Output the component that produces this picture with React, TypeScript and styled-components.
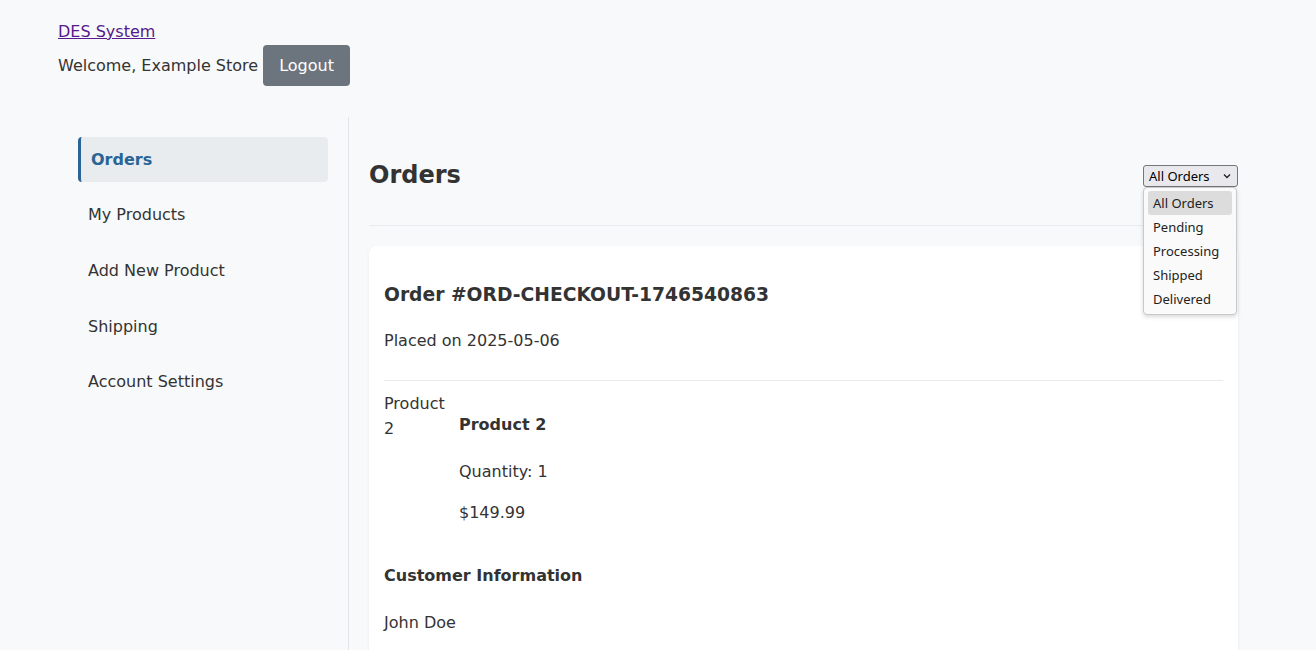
import React from 'react';
import styled, { createGlobalStyle } from 'styled-components';

const GlobalStyle = createGlobalStyle`
  html, body {
    margin: 0;
    padding: 0;
    background: #f8f9fa;
    color: #333;
    font-family: 'DejaVu Sans', Verdana, sans-serif;
    font-size: 16px;
    line-height: 1.6;
  }
  * {
    box-sizing: border-box;
  }
`;

const Page = styled.div`
  width: 1200px;
  margin: 0 auto;
  min-height: 650px;
  display: flex;
  flex-direction: column;
`;

const TopBar = styled.header`
  padding-top: 18px;
  margin-bottom: 30.6px;
`;

const BrandLink = styled.a`
  display: inline-block;
  margin-top: 1px;
  color: #551a8b;
  text-decoration: underline;
  cursor: pointer;
`;

const WelcomeRow = styled.div`
  display: flex;
  align-items: center;
  gap: 5px;
`;

const LogoutButton = styled.button`
  font-family: inherit;
  font-size: 16px;
  line-height: 1.6;
  color: #fff;
  background: #6c757d;
  border: none;
  border-radius: 4px;
  padding: 8px 16px;
  cursor: pointer;
`;

const Layout = styled.div`
  display: flex;
  flex: 1;
  align-items: stretch;
`;

const Sidebar = styled.nav`
  width: 291px;
  flex-shrink: 0;
  padding: 20px 20px;
  border-right: 1px solid #e3e5e8;
`;

const NavItem = styled.a<{ $active?: boolean }>`
  display: block;
  padding: 10px 10px;
  margin-bottom: 10px;
  border-radius: 4px;
  color: ${(p) => (p.$active ? '#2a6496' : '#333')};
  font-weight: ${(p) => (p.$active ? 700 : 400)};
  background: ${(p) => (p.$active ? '#e9ecef' : 'transparent')};
  border-left: ${(p) => (p.$active ? '3px solid #2a6496' : 'none')};
  text-decoration: none;
  cursor: pointer;
`;

const Main = styled.main`
  flex: 1;
  padding: 20px;
`;

const HeaderRow = styled.div`
  display: flex;
  justify-content: space-between;
  align-items: center;
  min-height: 89px;
  padding: 10px 0 20px;
  border-bottom: 1px solid #e9ecef;
  margin-bottom: 20px;
`;

const Title = styled.h1`
  margin: 0;
  font-size: 24px;
  font-weight: 700;
  line-height: 1.2;
`;

const FilterWrap = styled.div`
  position: relative;
  align-self: flex-start;
  margin-top: 18.4px;
`;

const SelectBox = styled.div`
  width: 95px;
  height: 22px;
  display: flex;
  align-items: center;
  justify-content: space-between;
  padding: 0 6px 0 5px;
  border: 1px solid #767676;
  border-radius: 3px;
  background: #e9e9ed;
  font-family: 'Noto Sans', 'Open Sans', sans-serif;
  font-size: 13px;
  line-height: 1;
  color: #000;
`;

const Menu = styled.ul`
  position: absolute;
  top: 22px;
  left: 0;
  width: 94px;
  margin: 0;
  padding: 3px 4px;
  list-style: none;
  background: #fafafa;
  border: 1px solid #c9c9c9;
  border-radius: 4px;
  box-shadow: 0 2px 4px rgba(0, 0, 0, 0.15);
  z-index: 10;
`;

const MenuItem = styled.li<{ $selected?: boolean }>`
  height: 24px;
  display: flex;
  align-items: center;
  padding: 0 5px;
  border-radius: 3px;
  background: ${(p) => (p.$selected ? '#dcdcdc' : 'transparent')};
  font-family: 'Noto Sans', 'Open Sans', sans-serif;
  font-size: 13px;
  color: #222;
`;

const Card = styled.section`
  background: #fff;
  border-radius: 8px;
  padding: 15px;
  box-shadow: 0 2px 4px rgba(0, 0, 0, 0.06);
  min-height: 420px;
`;

const CardHeader = styled.div`
  padding-bottom: 10px;
  border-bottom: 1px solid #e9ecef;
`;

const OrderTitle = styled.h3`
  font-size: 18.72px;
  margin: 18.72px 0;
`;

const Text = styled.p`
  margin: 16px 0;
`;

const ItemRow = styled.div`
  display: flex;
  align-items: flex-start;
  gap: 15px;
  margin-top: 10px;
`;

const ItemImage = styled.div`
  width: 60px;
  height: 60px;
  flex-shrink: 0;
`;

const ItemDetails = styled.div`
  display: block;
`;

const SubTitle = styled.h4`
  font-size: 16px;
  margin: 21.28px 0;
`;

const Chevron = () => (
  <svg width="8" height="6" viewBox="0 0 8 6" fill="none">
    <path d="M1 1.5 L4 4.5 L7 1.5" stroke="#222" strokeWidth="1.3" />
  </svg>
);

const statuses = ['All Orders', 'Pending', 'Processing', 'Shipped', 'Delivered'];

const App: React.FC = () => {
  return (
    <>
      <GlobalStyle />
      <Page>
        <TopBar>
          <BrandLink>DES System</BrandLink>
          <WelcomeRow>
            <span>Welcome, Example Store</span>
            <LogoutButton>Logout</LogoutButton>
          </WelcomeRow>
        </TopBar>
        <Layout>
          <Sidebar>
            <NavItem $active>Orders</NavItem>
            <NavItem>My Products</NavItem>
            <NavItem>Add New Product</NavItem>
            <NavItem>Shipping</NavItem>
            <NavItem>Account Settings</NavItem>
          </Sidebar>
          <Main>
            <HeaderRow>
              <Title>Orders</Title>
              <FilterWrap>
                <SelectBox>
                  <span>All Orders</span>
                  <Chevron />
                </SelectBox>
                <Menu>
                  {statuses.map((s, i) => (
                    <MenuItem key={s} $selected={i === 0}>
                      {s}
                    </MenuItem>
                  ))}
                </Menu>
              </FilterWrap>
            </HeaderRow>
            <Card>
              <CardHeader>
                <OrderTitle>Order #ORD-CHECKOUT-1746540863</OrderTitle>
                <Text>Placed on 2025-05-06</Text>
              </CardHeader>
              <ItemRow>
                <ItemImage>Product 2</ItemImage>
                <ItemDetails>
                  <SubTitle>Product 2</SubTitle>
                  <Text>Quantity: 1</Text>
                  <Text>$149.99</Text>
                </ItemDetails>
              </ItemRow>
              <div>
                <SubTitle>Customer Information</SubTitle>
                <Text>John Doe</Text>
              </div>
            </Card>
          </Main>
        </Layout>
      </Page>
    </>
  );
};

export default App;
